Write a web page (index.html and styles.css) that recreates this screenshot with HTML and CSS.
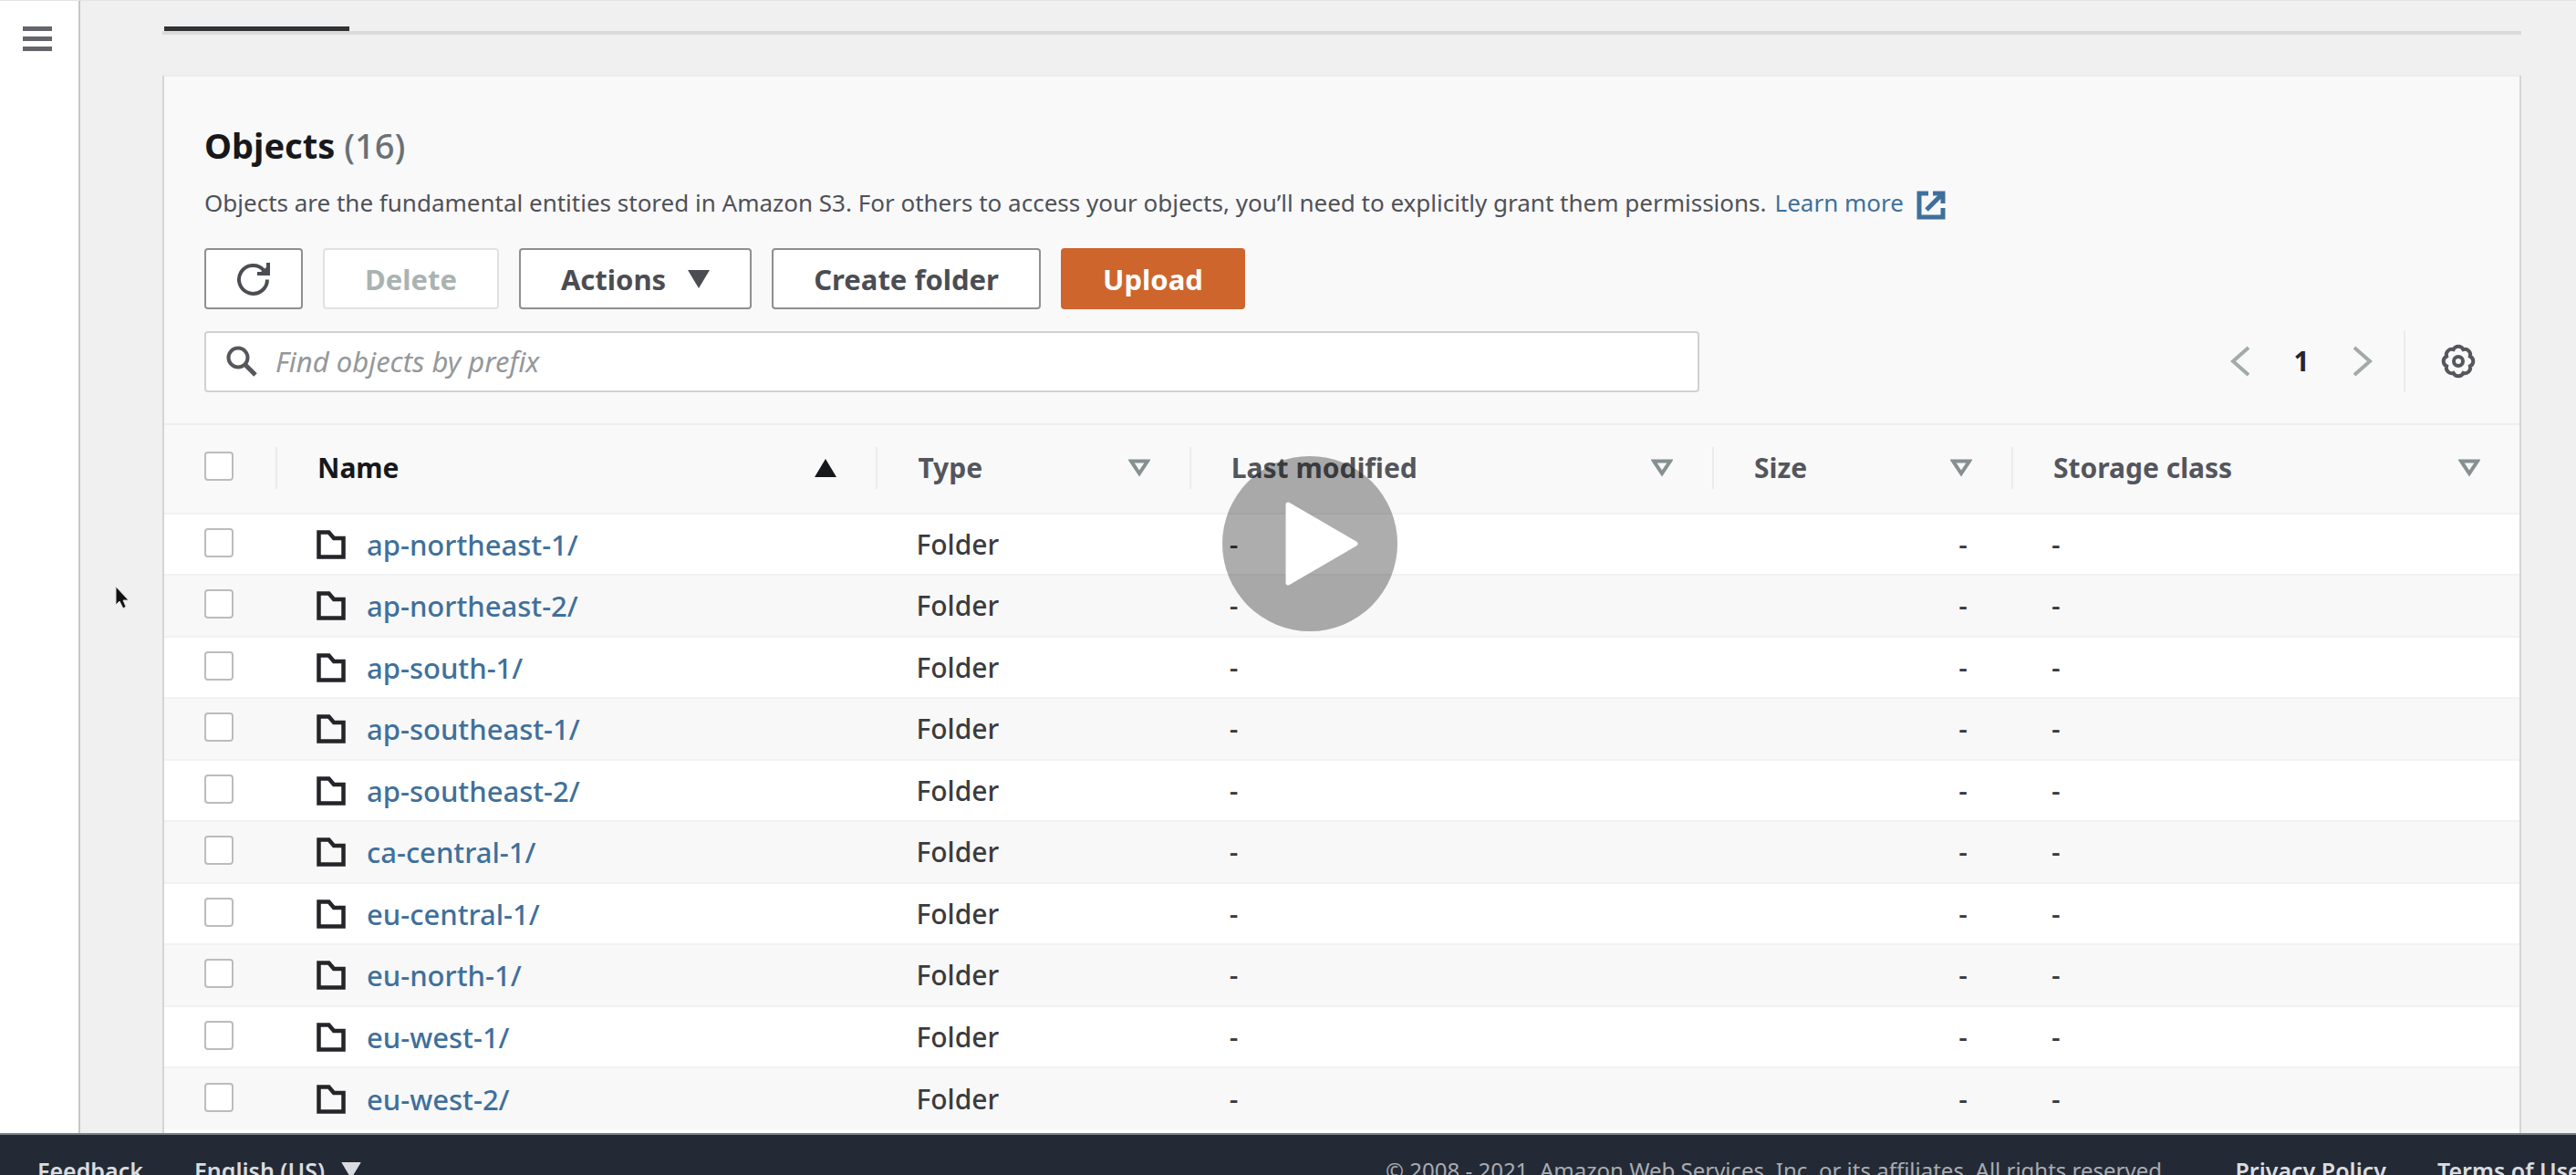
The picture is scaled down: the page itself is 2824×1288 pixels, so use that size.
FILE: index.html
```html
<!DOCTYPE html>
<html lang="en">
<head>
<meta charset="utf-8">
<title>Amazon S3 - Objects</title>
<link rel="stylesheet" href="styles.css">
</head>
<body>
<svg class="sprite" aria-hidden="true">
  <symbol id="folder" viewBox="0 0 34 34"><path d="M3.500 3.500H14.500L20 10H30.500V30.500H3.500Z" fill="none" stroke="currentColor" stroke-width="4.500"/></symbol>
  <symbol id="sort" viewBox="0 0 24 20"><path d="M3 2.500H21L12 16Z" fill="none" stroke="currentColor" stroke-width="4"/></symbol>
  <symbol id="sorted" viewBox="0 0 24 20"><path d="M12 0L24 20H0Z" fill="currentColor"/></symbol>
  <symbol id="caret" viewBox="0 0 24 20"><path d="M0 0H24L12 20Z" fill="currentColor"/></symbol>
</svg>
<div class="app">
  <div class="workspace">
    <nav class="sidebar">
      <button class="menu-button" type="button" aria-label="Open navigation"><span class="bar"></span><span class="bar"></span><span class="bar"></span></button>
    </nav>
    <main class="content">
      <div class="tabs"><div class="tab-active"></div></div>
      <section class="card">
        <header class="card-header">
          <h2 class="title">Objects <span class="count">(16)</span></h2>
          <p class="description">Objects are the fundamental entities stored in Amazon S3. For others to access your objects, you’ll need to explicitly grant them permissions. <a class="learn" href="#">Learn more<svg class="external" viewBox="0 0 32 32"><path d="M13 3H3V29H29V19M18 3H29V14M28 4L11 21" fill="none" stroke="currentColor" stroke-width="5"/></svg></a></p>
          <div class="actions">
            <button class="button refresh" type="button" aria-label="Refresh"><svg class="refresh-icon" viewBox="0 0 38 38"><path d="M34 19.500A15.500 15.500 0 1 1 30 9" fill="none" stroke="currentColor" stroke-width="4"/><path d="M33 1H37V15H23V11H27L33 6Z" fill="currentColor"/></svg></button>
            <button class="button" type="button" disabled>Delete</button>
            <button class="button" type="button">Actions<svg class="caret"><use href="#caret"/></svg></button>
            <button class="button" type="button">Create folder</button>
            <button class="button primary" type="button">Upload</button>
          </div>
          <div class="tools">
            <label class="search">
              <svg class="search-icon" viewBox="0 0 34 34"><circle cx="13" cy="13" r="10.500" fill="none" stroke="currentColor" stroke-width="4"/><path d="M20 20L32 32" stroke="currentColor" stroke-width="5"/></svg>
              <input class="search-input" type="text" placeholder="Find objects by prefix" aria-label="Find objects by prefix">
            </label>
            <div class="pager">
              <button class="pager-button" type="button" aria-label="Previous page"><svg class="chevron" viewBox="0 0 22 34"><path d="M20 2L3 17L20 32" fill="none" stroke="currentColor" stroke-width="4"/></svg></button>
              <span class="page">1</span>
              <button class="pager-button" type="button" aria-label="Next page"><svg class="chevron" viewBox="0 0 22 34"><path d="M2 2L19 17L2 32" fill="none" stroke="currentColor" stroke-width="4"/></svg></button>
              <button class="settings" type="button" aria-label="Preferences"><svg class="gear" viewBox="-20 -20 40 40"><g fill="none" stroke="currentColor" stroke-width="4"><path d="M-5.400-12.900A6 6 0 0 1 5.400-12.900A6 6 0 0 1 12.900-5.400A6 6 0 0 1 12.900 5.400A6 6 0 0 1 5.400 12.900A6 6 0 0 1-5.400 12.900A6 6 0 0 1-12.900 5.400A6 6 0 0 1-12.900-5.400A6 6 0 0 1-5.400-12.900Z"/><circle r="5"/></g></svg></button>
            </div>
          </div>
        </header>
        <table class="objects">
          <thead>
            <tr>
              <th class="col-check"><input class="check" type="checkbox" aria-label="Select all"></th>
              <th class="col-name sorted"><div class="head">Name<svg class="sort"><use href="#sorted"/></svg></div></th>
              <th class="col-type"><div class="head">Type<svg class="sort"><use href="#sort"/></svg></div></th>
              <th class="col-modified"><div class="head">Last modified<svg class="sort"><use href="#sort"/></svg></div></th>
              <th class="col-size"><div class="head">Size<svg class="sort"><use href="#sort"/></svg></div></th>
              <th class="col-class"><div class="head">Storage class<svg class="sort"><use href="#sort"/></svg></div></th>
            </tr>
          </thead>
          <tbody>
            <tr><td><input class="check" type="checkbox" aria-label="ap-northeast-1/"></td><td><a class="object" href="#"><svg class="folder"><use href="#folder"/></svg>ap-northeast-1/</a></td><td>Folder</td><td>-</td><td class="size">-</td><td>-</td></tr>
            <tr><td><input class="check" type="checkbox" aria-label="ap-northeast-2/"></td><td><a class="object" href="#"><svg class="folder"><use href="#folder"/></svg>ap-northeast-2/</a></td><td>Folder</td><td>-</td><td class="size">-</td><td>-</td></tr>
            <tr><td><input class="check" type="checkbox" aria-label="ap-south-1/"></td><td><a class="object" href="#"><svg class="folder"><use href="#folder"/></svg>ap-south-1/</a></td><td>Folder</td><td>-</td><td class="size">-</td><td>-</td></tr>
            <tr><td><input class="check" type="checkbox" aria-label="ap-southeast-1/"></td><td><a class="object" href="#"><svg class="folder"><use href="#folder"/></svg>ap-southeast-1/</a></td><td>Folder</td><td>-</td><td class="size">-</td><td>-</td></tr>
            <tr><td><input class="check" type="checkbox" aria-label="ap-southeast-2/"></td><td><a class="object" href="#"><svg class="folder"><use href="#folder"/></svg>ap-southeast-2/</a></td><td>Folder</td><td>-</td><td class="size">-</td><td>-</td></tr>
            <tr><td><input class="check" type="checkbox" aria-label="ca-central-1/"></td><td><a class="object" href="#"><svg class="folder"><use href="#folder"/></svg>ca-central-1/</a></td><td>Folder</td><td>-</td><td class="size">-</td><td>-</td></tr>
            <tr><td><input class="check" type="checkbox" aria-label="eu-central-1/"></td><td><a class="object" href="#"><svg class="folder"><use href="#folder"/></svg>eu-central-1/</a></td><td>Folder</td><td>-</td><td class="size">-</td><td>-</td></tr>
            <tr><td><input class="check" type="checkbox" aria-label="eu-north-1/"></td><td><a class="object" href="#"><svg class="folder"><use href="#folder"/></svg>eu-north-1/</a></td><td>Folder</td><td>-</td><td class="size">-</td><td>-</td></tr>
            <tr><td><input class="check" type="checkbox" aria-label="eu-west-1/"></td><td><a class="object" href="#"><svg class="folder"><use href="#folder"/></svg>eu-west-1/</a></td><td>Folder</td><td>-</td><td class="size">-</td><td>-</td></tr>
            <tr><td><input class="check" type="checkbox" aria-label="eu-west-2/"></td><td><a class="object" href="#"><svg class="folder"><use href="#folder"/></svg>eu-west-2/</a></td><td>Folder</td><td>-</td><td class="size">-</td><td>-</td></tr>
          </tbody>
        </table>
      </section>
    </main>
  </div>
  <footer class="footer">
    <a class="footer-link" href="#">Feedback</a>
    <button class="language" type="button">English (US)<svg class="language-caret" viewBox="0 0 24 20"><use href="#caret"/></svg></button>
    <span class="copyright">© 2008 - 2021, Amazon Web Services, Inc. or its affiliates. All rights reserved.</span>
    <a class="footer-link" href="#">Privacy Policy</a>
    <a class="footer-link" href="#">Terms of Use</a>
  </footer>
</div>
<button class="play" type="button" aria-label="Play video"><svg class="play-icon" viewBox="0 0 80 92"><path d="M3 3L77 46L3 89Z" fill="#fff" stroke="#fff" stroke-width="5" stroke-linejoin="round"/></svg></button>
<svg class="cursor" viewBox="0 0 16 26"><path d="M1 1V21L5 17L9 25L12 23L9 16H15Z" fill="#111" stroke="#ddd"/></svg>
</body>
</html>
```
FILE: styles.css
```css
* { box-sizing: border-box; }

body {
  margin: 0;
  background: #f0f0f0;
  color: #3a3b3e;
  font: 500 30px/40px "Noto Sans", "Open Sans", sans-serif;
  overflow: hidden;
}

a { color: #3f709b; text-decoration: none; }
button { font: inherit; color: inherit; border: 0; padding: 0; background: none; }
svg { flex: none; display: block; }
.sprite { display: none; }

.app { display: flex; flex-direction: column; height: 100vh; }
.workspace { flex: 1; min-height: 0; display: flex; overflow: hidden; border-top: 1px solid #e4e4e4; }

.sidebar { width: 88px; flex: none; background: #fff; border-right: 2px solid #c6c7c8; }
.menu-button { display: flex; flex-direction: column; gap: 6px; margin: 28px 25px; }
.bar { width: 32px; height: 5px; background: #64666c; }

.content { flex: 1; min-width: 0; padding: 28px 60px 0 90px; }
.tabs { border-bottom: 4px solid #d9dbdb; margin-bottom: 44px; padding-left: 2px; }
.tab-active { width: 203px; height: 5px; background: #313234; }

.card { background: #fff; border: 2px solid #d3d5d6; border-top-color: #ececec; padding-bottom: 40px; }
.card-header { padding: 47px 44px 34px; background: #f9f9fa; }
.title { margin: 0; font-size: 38px; line-height: 56px; font-weight: 700; color: #17181b; }
.count { font-weight: 500; color: #6a7174; }
.description { margin: 15px 0 30px; font-size: 26px; font-weight: 400; line-height: 40px; color: #4f5157; display: flex; gap: 9px; white-space: nowrap; }
.learn { display: flex; align-items: center; gap: 14px; }
.external { width: 32px; height: 32px; margin-top: 6px; }

.actions { display: flex; gap: 22px; }
.button {
  display: flex; align-items: center; gap: 24px;
  height: 67px; padding: 0 44px;
  border: 2px solid #8d8f91; border-radius: 4px;
  background: #fff; color: #4b4d53; font-weight: 700; font-size: 31px;
}
.button:disabled { border-color: #dfe2e2; color: #aab3b2; }
.primary { background: #ce652d; border-color: #ce652d; color: #fff; }
.refresh { padding: 0 33px; }
.refresh-icon { width: 38px; height: 38px; }
.caret { width: 24px; height: 20px; }

.tools { display: flex; align-items: center; justify-content: space-between; margin-top: 23px; }
.search {
  display: flex; align-items: center; gap: 20px;
  width: 65.700%; height: 67px; padding: 0 22px;
  border: 2px solid #ced2d2; border-radius: 4px; background: #fff; color: #55575c;
}
.search-icon { width: 34px; height: 34px; }
.search-input { flex: 1; border: 0; outline: 0; padding: 0; background: none; font: inherit; font-size: 31px; font-weight: 400; }
.search-input::placeholder { color: #94989a; font-style: italic; opacity: 1; }
.pager { display: flex; align-items: center; color: #a2aaaa; }
.chevron { width: 22px; height: 34px; }
.page { width: 112px; text-align: center; font-weight: 700; color: #26262c; }
.settings { margin-left: 34px; padding: 14px 3px 14px 38px; border-left: 2px solid #ececed; color: #55575d; }
.gear { width: 40px; height: 40px; }

.objects { width: 100%; border-collapse: collapse; table-layout: fixed; border-top: 2px solid #efefef; }
th, td { padding: 0 0 0 44px; text-align: left; }
thead { background: #f9f9fa; }
th { height: 98px; padding: 0 0 2px; color: #54565c; font-weight: 700; }
td { height: 67px; border-top: 2px solid #f2f2f2; }
tbody tr { background: #fff; }
tbody tr:nth-child(even) { background: #f8f8f8; }
tbody tr:nth-child(even) td { height: 68px; }
.head { display: flex; align-items: center; justify-content: space-between; height: 46px; padding: 0 43px 0 44px; border-left: 2px solid #ececed; }
.sort { width: 24px; height: 20px; color: #879090; }
.sorted, .sorted .sort { color: #17181b; }
.col-check { width: 122px; padding-left: 44px; }
.col-name { width: 25.500%; }
.col-type { width: 13.300%; }
.col-modified { width: 22.200%; }
.col-size { width: 12.700%; }
.size { text-align: right; padding-right: 48px; }
.check { appearance: none; display: block; width: 32px; height: 32px; margin: 0 0 4px; border: 2px solid #babdbd; border-radius: 4px; background: #fff; }
.object { display: flex; align-items: center; gap: 22px; font-size: 31px; }
.folder { width: 34px; height: 34px; color: #242528; }

.footer {
  flex: none; display: flex; align-items: flex-start;
  height: 46px; padding: 19px 0 0 41px; overflow: hidden;
  background: #232a36; border-top: 2px solid #7d8288;
  font-size: 24px; font-weight: 400; line-height: 40px; white-space: nowrap; color: #a9adb2;
}
.footer-link, .language { color: #dadcdf; font-weight: 600; flex: none; font-size: 25px; }
.language { display: flex; align-items: center; gap: 18px; margin-left: 56px; }
.language-caret { width: 22px; height: 18px; }
.copyright { margin-left: auto; margin-right: 74px; }
.copyright ~ .footer-link { margin-right: 56px; }
.footer-link:last-child { width: 96px; }

.play {
  position: absolute; left: 1340px; top: 500px;
  width: 192px; height: 192px; border-radius: 50%;
  background: rgba(0, 0, 0, .32);
  display: flex; align-items: center; justify-content: center; padding-left: 26px;
}
.play-icon { width: 80px; height: 92px; }
.cursor { position: absolute; left: 126px; top: 642px; width: 16px; height: 26px; }
```
